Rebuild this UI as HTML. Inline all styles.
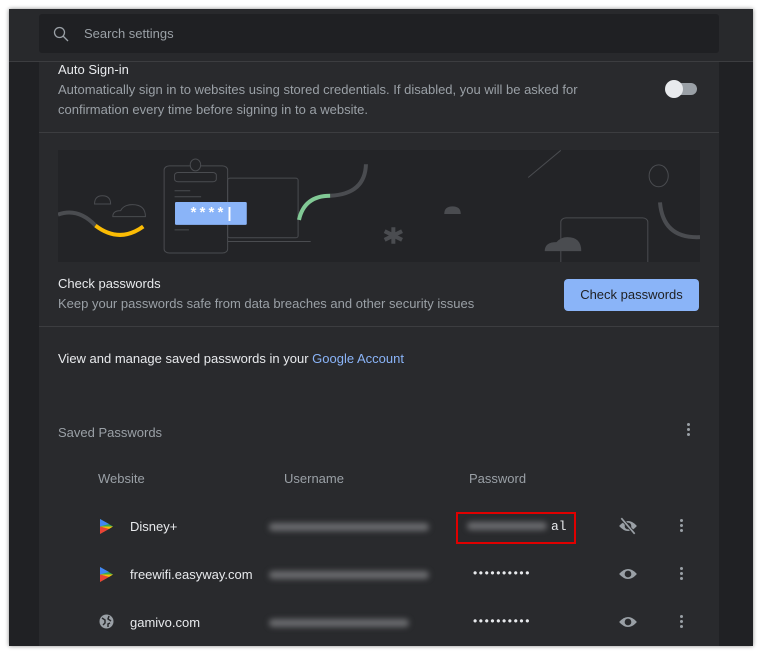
<!DOCTYPE html><html><head><style>
body{margin:0;width:761px;height:654px;background:#fff;font-family:"Liberation Sans",sans-serif;position:relative;overflow:hidden}
.shot{position:absolute;left:9px;top:9px;width:744px;height:637px;background:#202124;overflow:hidden;box-shadow:0 0 4px #888}
.hdr{position:absolute;left:0;top:0;width:744px;height:52px;background:#28292c;border-bottom:1px solid #3c3d40}
.search{position:absolute;left:30px;top:5px;width:680px;height:39px;background:#1f2023;border-radius:3px;color:#9aa0a6;font-size:13px}
.card{position:absolute;left:30px;top:53px;width:680px;height:600px;background:#292a2d}
.t{position:absolute;font-size:13px;color:#e8eaed;white-space:nowrap}
.s{color:#9aa0a6}
.sep{position:absolute;left:0;width:680px;height:1px;background:#3c3d40}
.blur{position:absolute;height:8px;border-radius:4px;background:#6a6b6e;filter:blur(3px)}
.dots{position:absolute;width:3px}
.dots i{display:block;width:3px;height:3px;border-radius:50%;background:#9aa0a6;margin-bottom:2px}
.pw{letter-spacing:1.6px;font-size:12px}
svg.il *{vector-effect:non-scaling-stroke}
</style></head><body><div class="shot">
<div class="hdr"><div class="search">
<svg style="position:absolute;left:14px;top:12px" width="16" height="16" viewBox="0 0 16 16"><circle cx="6.5" cy="6.5" r="5" fill="none" stroke="#9aa0a6" stroke-width="1.3"/><path d="M10 10l5 5" stroke="#9aa0a6" stroke-width="1.3"/></svg>
<span style="position:absolute;left:45px;top:12px">Search settings</span></div></div>
<div class="card">
<div class="t" style="left:19px;top:0px">Auto Sign-in</div>
<div class="t s" style="left:19px;top:18px;line-height:20px">Automatically sign in to websites using stored credentials. If disabled, you will be asked for<br>confirmation every time before signing in to a website.</div>
<div style="position:absolute;left:628px;top:21px;width:30px;height:12px;border-radius:6px;background:#9aa0a6"></div>
<div style="position:absolute;left:626px;top:18px;width:18px;height:18px;border-radius:50%;background:#e8eaed"></div>
<div class="sep" style="top:70px"></div>
<svg class="il" style="position:absolute;left:19px;top:88px" width="642" height="112" viewBox="44 27 1476 338" preserveAspectRatio="none">
<rect x="44" y="27" width="1476" height="338" fill="#232427"/>
<path d="M44 222 Q90 200 130 255" stroke="#4a4c50" stroke-width="4" fill="none"/>
<path d="M130 255 Q185 310 240 258" stroke="#fbbc04" stroke-width="4" fill="none"/>
<path d="M128 190 Q128 165 146 165 Q165 165 165 190z M170 228 Q170 210 188 210 Q195 192 215 192 Q245 192 245 228z" stroke="#4a4c50" fill="none"/>
<rect x="288" y="75" width="146" height="263" rx="12" stroke="#4a4c50" fill="none"/>
<rect x="434" y="112" width="162" height="180" rx="6" stroke="#4a4c50" fill="none"/>
<path d="M434 303h191" stroke="#4a4c50"/>
<ellipse cx="360" cy="72" rx="12" ry="18" stroke="#4a4c50" fill="#232427"/>
<rect x="312" y="95" width="96" height="28" rx="8" stroke="#4a4c50" fill="none"/>
<path d="M312 150h36M312 168h61M312 268h33" stroke="#4a4c50"/>
<rect x="313" y="184" width="165" height="69" rx="3" fill="#8ab4f8"/>
<path d="M598 238 Q610 165 670 165" stroke="#81c995" stroke-width="4" fill="none"/>
<path d="M670 165 Q750 160 752 70" stroke="#4a4c50" stroke-width="4" fill="none"/>
<path d="M815 260v50M795 272l40 26M835 272l-40 26" stroke="#4a4c50" stroke-width="4"/>
<path d="M932 220 Q932 197 951 197 Q970 197 970 220z" fill="#4a4c50"/>
<path d="M1125 110 L1200 28" stroke="#4a4c50"/>
<ellipse cx="1425" cy="105" rx="22" ry="33" stroke="#4a4c50" fill="none"/>
<path d="M1428 185 Q1435 295 1520 290" stroke="#4a4c50" stroke-width="4" fill="none"/>
<rect x="1200" y="232" width="200" height="160" rx="12" stroke="#4a4c50" fill="none"/>
<path d="M1163 332 Q1163 305 1190 305 Q1200 290 1215 290 Q1247 290 1247 332z" fill="#4a4c50"/>
</svg>
<div style="position:absolute;left:137px;top:140px;width:71px;height:23px;color:#fff;font:bold 15px 'Liberation Mono',monospace;line-height:25px;text-align:center">****|</div>
<div class="t" style="left:19px;top:214px">Check passwords</div>
<div class="t s" style="left:19px;top:234px">Keep your passwords safe from data breaches and other security issues</div>
<div style="position:absolute;left:525px;top:217px;width:135px;height:32px;background:#8ab4f8;border-radius:4px;color:#202124;font-size:13px;text-align:center;line-height:32px">Check passwords</div>
<div class="sep" style="top:264px"></div>
<div class="t" style="left:19px;top:289px">View and manage saved passwords in your <span style="color:#8ab4f8">Google Account</span></div>
<div class="t s" style="left:19px;top:363px">Saved Passwords</div>
<div class="dots" style="left:648px;top:361px"><i></i><i></i><i></i></div>
<div class="t s" style="left:59px;top:409px">Website</div>
<div class="t s" style="left:245px;top:409px">Username</div>
<div class="t s" style="left:430px;top:409px">Password</div>
<svg style="position:absolute;left:61px;top:457px" width="13" height="15" viewBox="0 0 13 15"><path d="M0 0L13 7.5L0 15z" fill="#34a853"/><path d="M0 0L9 5L0 7.5z" fill="#4285f4"/><path d="M0 7.5L13 7.5L9 10z" fill="#fbbc04"/><path d="M0 7.5L9 10L0 15z" fill="#ea4335"/></svg>
<div class="t" style="left:91px;top:457px">Disney+</div>
<div class="blur" style="left:230px;top:461px;width:160px"></div>
<div style="position:absolute;left:417px;top:450px;width:116px;height:28px;border:2px solid #e00000"></div>
<div class="blur" style="left:428px;top:460px;width:80px"></div>
<div class="t" style="left:512px;top:457px;font-family:'Liberation Mono'">al</div>
<svg style="position:absolute;left:579px;top:454px" width="20" height="20" viewBox="0 0 18 18"><path d="M1 9Q9 0 17 9Q9 18 1 9z" fill="#9aa0a6"/><circle cx="9" cy="9" r="3" fill="#292a2d"/><path d="M3 2L15 16" stroke="#292a2d" stroke-width="3"/><path d="M3 2L15 16" stroke="#9aa0a6" stroke-width="1.5"/></svg>
<div class="dots" style="left:641px;top:457px"><i></i><i></i><i></i></div>
<svg style="position:absolute;left:61px;top:505px" width="13" height="15" viewBox="0 0 13 15"><path d="M0 0L13 7.5L0 15z" fill="#34a853"/><path d="M0 0L9 5L0 7.5z" fill="#4285f4"/><path d="M0 7.5L13 7.5L9 10z" fill="#fbbc04"/><path d="M0 7.5L9 10L0 15z" fill="#ea4335"/></svg>
<div class="t" style="left:91px;top:505px">freewifi.easyway.com</div>
<div class="blur" style="left:230px;top:509px;width:160px"></div>
<div class="t pw" style="left:434px;top:504px">••••••••••</div>
<svg style="position:absolute;left:579px;top:502px" width="20" height="20" viewBox="0 0 18 18"><path d="M1 9Q9 0 17 9Q9 18 1 9z" fill="#9aa0a6"/><circle cx="9" cy="9" r="3" fill="#292a2d"/></svg>
<div class="dots" style="left:641px;top:505px"><i></i><i></i><i></i></div>
<svg style="position:absolute;left:60px;top:552px" width="15" height="15" viewBox="0 0 15 15"><circle cx="7.5" cy="7.5" r="7" fill="#9aa0a6"/><path d="M3 4l3 2v3l-2 2M10 2l-1 3 3 2M9 13v-3l2-1" stroke="#292a2d" stroke-width="1.5" fill="none"/></svg>
<div class="t" style="left:91px;top:553px">gamivo.com</div>
<div class="blur" style="left:230px;top:557px;width:140px"></div>
<div class="t pw" style="left:434px;top:552px">••••••••••</div>
<svg style="position:absolute;left:579px;top:550px" width="20" height="20" viewBox="0 0 18 18"><path d="M1 9Q9 0 17 9Q9 18 1 9z" fill="#9aa0a6"/><circle cx="9" cy="9" r="3" fill="#292a2d"/></svg>
<div class="dots" style="left:641px;top:553px"><i></i><i></i><i></i></div>
</div></div></body></html>
